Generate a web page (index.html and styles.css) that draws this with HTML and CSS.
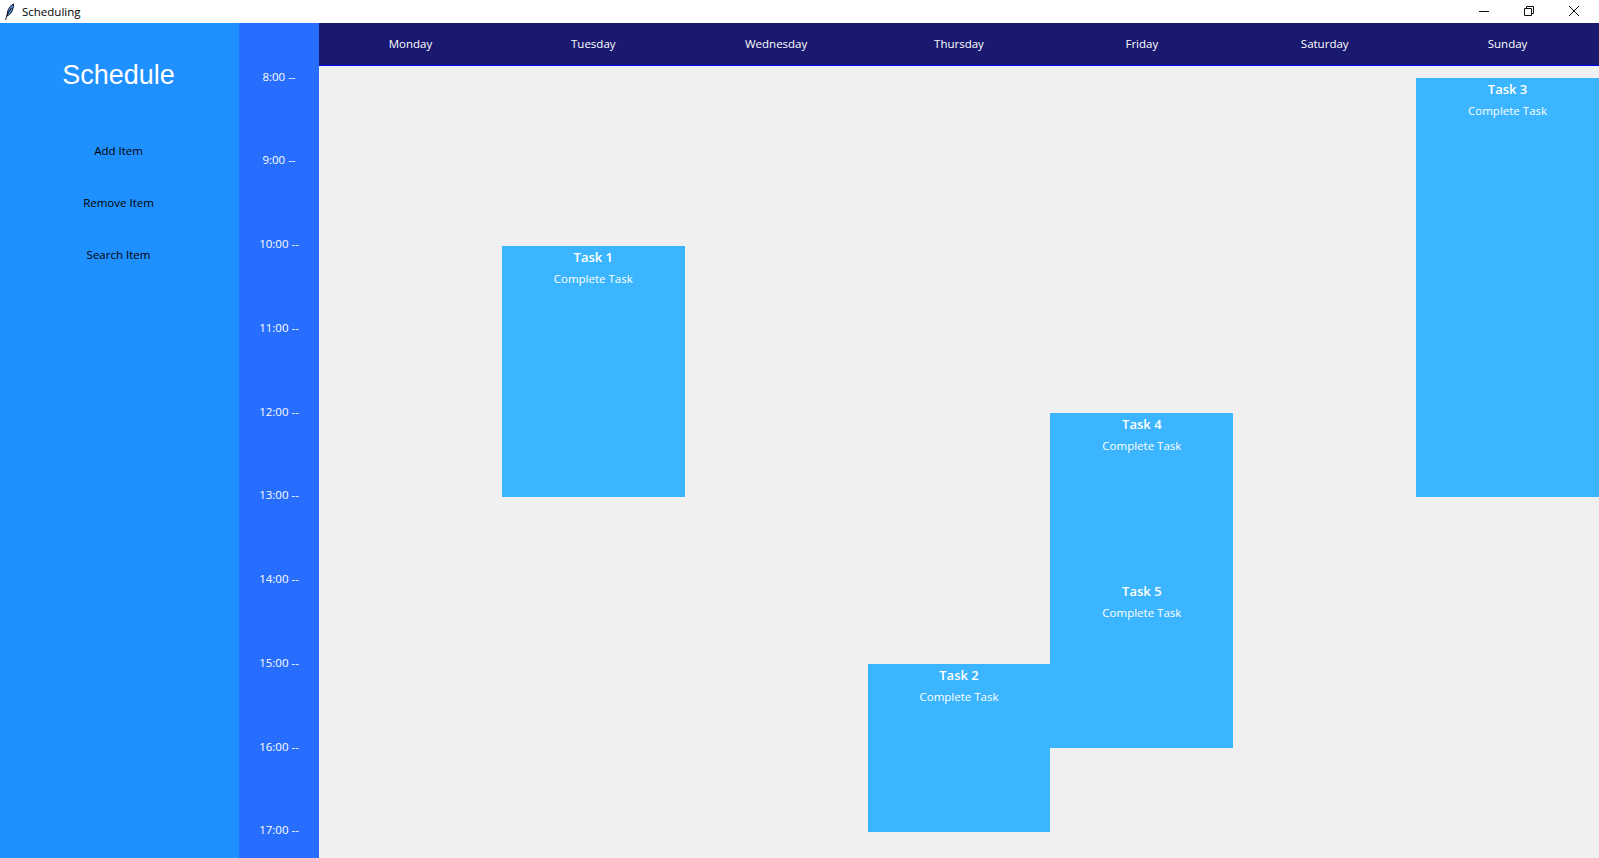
FILE: index.html
```html
<!DOCTYPE html>
<html lang="en">
  <head>
    <meta charset="UTF-8" />
    <meta name="viewport" content="width=device-width, initial-scale=1.0" />
    <title>Scheduling</title>
    <link rel="stylesheet" href="styles.css">
  </head>
  <body>
    <div class="titlebar">
      <svg class="app-icon" width="16" height="18" viewBox="0 0 16 18">
        <path d="M11.500 1C9 2 6.500 5 5.500 9L5 13c2.500-1 4.500-3 5.500-6 .8-2 1-4 1-6z" fill="#5b8fd6" stroke="#10182c"/>
        <path d="M9.500 5L5.500 11 3.500 17" fill="none" stroke="#10182c"/>
      </svg>
      <span class="app-name">Scheduling</span>
      <div class="window-buttons">
        <svg width="12" height="12" viewBox="0 0 12 12"><path d="M1 6.500h10" stroke="#111" fill="none"/></svg>
        <svg width="12" height="12" viewBox="0 0 12 12"><path d="M1.500 3.500h7v7h-7zM3.500 3.500v-2h7v7h-2" stroke="#111" fill="none"/></svg>
        <svg width="12" height="12" viewBox="0 0 12 12"><path d="M1 1l10 10M11 1L1 11" stroke="#111" fill="none"/></svg>
      </div>
    </div>

    <div class="app">
      <div class="sidebar">
        <h1>Schedule</h1>
        <div class="menu">
          <div class="menu-item">Add Item</div>
          <div class="menu-item">Remove Item</div>
          <div class="menu-item">Search Item</div>
        </div>
      </div>

      <div class="times">
        <div class="time">8:00 --</div>
        <div class="time">9:00 --</div>
        <div class="time">10:00 --</div>
        <div class="time">11:00 --</div>
        <div class="time">12:00 --</div>
        <div class="time">13:00 --</div>
        <div class="time">14:00 --</div>
        <div class="time">15:00 --</div>
        <div class="time">16:00 --</div>
        <div class="time">17:00 --</div>
      </div>

      <div class="calendar">
        <div class="days">
          <div class="day">Monday</div>
          <div class="day">Tuesday</div>
          <div class="day">Wednesday</div>
          <div class="day">Thursday</div>
          <div class="day">Friday</div>
          <div class="day">Saturday</div>
          <div class="day">Sunday</div>
        </div>
        <div class="grid">
          <div class="task task-1"><div class="task-title">Task 1</div><div class="task-text">Complete Task</div></div>
          <div class="task task-2"><div class="task-title">Task 2</div><div class="task-text">Complete Task</div></div>
          <div class="task task-3"><div class="task-title">Task 3</div><div class="task-text">Complete Task</div></div>
          <div class="task task-4"><div class="task-title">Task 4</div><div class="task-text">Complete Task</div></div>
          <div class="task task-5"><div class="task-title">Task 5</div><div class="task-text">Complete Task</div></div>
        </div>
      </div>
    </div>
  </body>
</html>
```

FILE: styles.css
```css
body {
  font-family: "Open Sans", "Noto Sans", sans-serif;
  font-size: 11.5px;
  margin: 0;
  height: 858px;
  overflow: hidden;
  background-color: #f0f0f0;
}

.titlebar {
  display: flex;
  align-items: center;
  height: 23px;
  background-color: #fff;
  color: #000;
}

.app-icon {
  margin-left: 2px;
}

.app-name {
  margin-left: 4px;
}

.window-buttons {
  display: flex;
  gap: 33px;
  margin-left: auto;
  margin-right: 19px;
  margin-bottom: 2px;
}

.app {
  display: flex;
  height: 835px;
}

.sidebar {
  width: 237px;
  padding-right: 2px;
  background-color: #1e90ff;
  text-align: center;
}

.sidebar h1 {
  margin: 32px 0 0;
  font-family: "Liberation Sans", Arial, sans-serif;
  font-size: 27px;
  font-weight: normal;
  line-height: 40px;
  color: #fff;
}

.menu {
  margin-top: 30px;
}

.menu-item {
  height: 52px;
  line-height: 52px;
  color: #000;
}

.times {
  display: flex;
  flex-direction: column;
  gap: 66.75px;
  width: 80px;
  padding-top: 44.6px;
  background-color: #276eff;
  color: #fff;
  text-align: center;
}

.time {
  height: 17px;
  line-height: 17px;
}

.calendar {
  flex: 1;
}

.days {
  display: grid;
  grid-template-columns: repeat(7, 1fr);
  height: 42px;
  background-color: #191970;
  border-bottom: 1px solid #0000ff;
}

.day {
  line-height: 42px;
  text-align: center;
  color: #fff;
}

.grid {
  display: grid;
  grid-template-columns: repeat(7, 1fr);
  grid-template-rows: repeat(9, 83.75px);
  padding-top: 12px;
}

.task {
  background-color: #3bb5ff;
  color: #fff;
  text-align: center;
}

.task-title {
  margin-top: 2px;
  font-size: 13px;
  font-weight: 600;
  line-height: 18px;
}

.task-text {
  margin-top: 4px;
  line-height: 17px;
}

.task-1 {
  grid-column: 2;
  grid-row: 3 / 6;
}

.task-2 {
  grid-column: 4;
  grid-row: 8 / 10;
}

.task-3 {
  grid-column: 7;
  grid-row: 1 / 6;
}

.task-4 {
  grid-column: 5;
  grid-row: 5 / 7;
}

.task-5 {
  grid-column: 5;
  grid-row: 7 / 9;
}

.task-5 .task-title {
  margin-top: 1px;
}
```
